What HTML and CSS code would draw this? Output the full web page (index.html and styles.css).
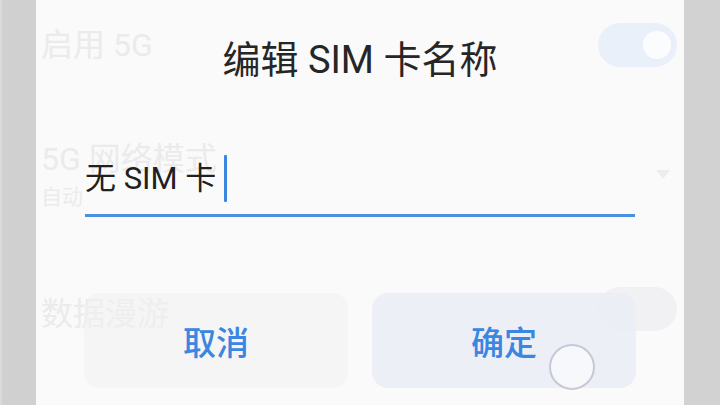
FILE: index.html
```html
<!DOCTYPE html>
<html lang="zh-CN">
<head>
<meta charset="utf-8">
<title>编辑 SIM 卡名称</title>
<link rel="stylesheet" href="styles.css">
</head>
<body>
<div class="strip strip-left"></div>
<div class="screen">
  <div class="settings">
    <div class="row row-5g">
      <span class="label">启用 5G</span>
      <span class="toggle toggle-on"><span class="knob"></span></span>
    </div>
    <div class="row row-mode">
      <div class="mode-text">
        <span class="label">5G 网络模式</span>
        <span class="sub">自动</span>
      </div>
      <span class="caret"></span>
    </div>
    <div class="row row-roam">
      <span class="label">数据漫游</span>
      <span class="toggle toggle-off"><span class="knob"></span></span>
    </div>
  </div>

  <div class="dialog">
    <div class="title">编辑 SIM 卡名称</div>
    <div class="field">
      <div class="value"><span class="text">无 SIM 卡</span><span class="cursor"></span></div>
      <div class="underline"></div>
    </div>
    <div class="buttons">
      <div class="btn btn-cancel">取消</div>
      <div class="btn btn-ok">确定</div>
    </div>
  </div>
  <div class="touch"></div>
</div>
<div class="strip strip-right"></div>
</body>
</html>
```
FILE: styles.css
```css
html, body {
  margin: 0;
  padding: 0;
}
body {
  width: 720px;
  height: 405px;
  overflow: hidden;
  display: flex;
  font-family: Roboto, "Noto Sans CJK SC", sans-serif;
  background: #fafafa;
}
.strip {
  width: 36px;
  flex: none;
  background: #d0d0d0;
}
.strip-left {
  box-sizing: border-box;
  border-left: 2px solid #dadada;
}
.strip-right {
  background: #d2d2d2;
}
.screen {
  flex: 1;
  position: relative;
  background: #fafafa;
}

/* faint settings behind the dialog */
.settings {
  padding: 0 7px 0 5px;
  color: #ebebeb;
}
.row {
  display: flex;
  justify-content: space-between;
}
.label {
  font-size: 32px;
  line-height: 38px;
}
.row-5g {
  height: 90px;
  align-items: center;
}
.toggle {
  position: relative;
  width: 79px;
  height: 44px;
  border-radius: 22px;
}
.toggle-on {
  background: #eaf0fa;
}
.toggle-on .knob {
  position: absolute;
  right: 6px;
  top: 8px;
  width: 28px;
  height: 28px;
  border-radius: 50%;
  background: #fbfcfe;
}
.toggle-off {
  background: #f1f1f3;
}
.toggle-off .knob {
  position: absolute;
  left: 14px;
  top: 18px;
  width: 18px;
  height: 4px;
  border-radius: 2px;
  background: #e8e8ec;
}
.row-mode {
  height: 190px;
  align-items: flex-start;
  padding-top: 50px;
  box-sizing: border-box;
}
.mode-text {
  display: flex;
  flex-direction: column;
}
.sub {
  font-size: 21px;
  line-height: 30px;
  margin-top: 4px;
}
.caret {
  width: 0;
  height: 0;
  margin: 30px 7px 0 0;
  border-left: 7px solid transparent;
  border-right: 7px solid transparent;
  border-top: 9px solid #ececec;
}
.row-roam {
  align-items: flex-start;
  padding-top: 7px;
}
.row-roam .label {
  margin-top: 8px;
}

/* dialog */
.dialog {
  position: absolute;
  inset: 0;
  display: flex;
  flex-direction: column;
}
.title {
  margin-top: 38px;
  font-size: 38px;
  line-height: 44px;
  font-weight: 400;
  color: #262626;
  text-align: center;
}
.field {
  margin: 73px 49px 0;
}
.value {
  display: flex;
  align-items: center;
  height: 47px;
}
.text {
  font-size: 31px;
  line-height: 47px;
  color: #202020;
}
.cursor {
  width: 3px;
  height: 47px;
  margin-left: 8px;
  background: #3c86e0;
  border-radius: 1px;
}
.underline {
  margin-top: 12px;
  height: 3px;
  background: #4a8fe0;
}
.buttons {
  margin: 76px 48px 0;
  display: grid;
  grid-template-columns: 1fr 1fr;
  gap: 24px;
}
.btn {
  height: 95px;
  border-radius: 16px;
  display: flex;
  align-items: center;
  justify-content: center;
  font-size: 33px;
  font-weight: 500;
  color: #3a86e0;
}
.btn-cancel {
  background: rgba(240, 240, 243, 0.55);
}
.btn-ok {
  background: rgba(234, 237, 245, 0.9);
}
.touch {
  position: absolute;
  left: 513px;
  top: 344px;
  width: 42px;
  height: 42px;
  border-radius: 50%;
  border: 2px solid #c8c8d8;
  background: rgba(252, 252, 255, 0.7);
}
```
